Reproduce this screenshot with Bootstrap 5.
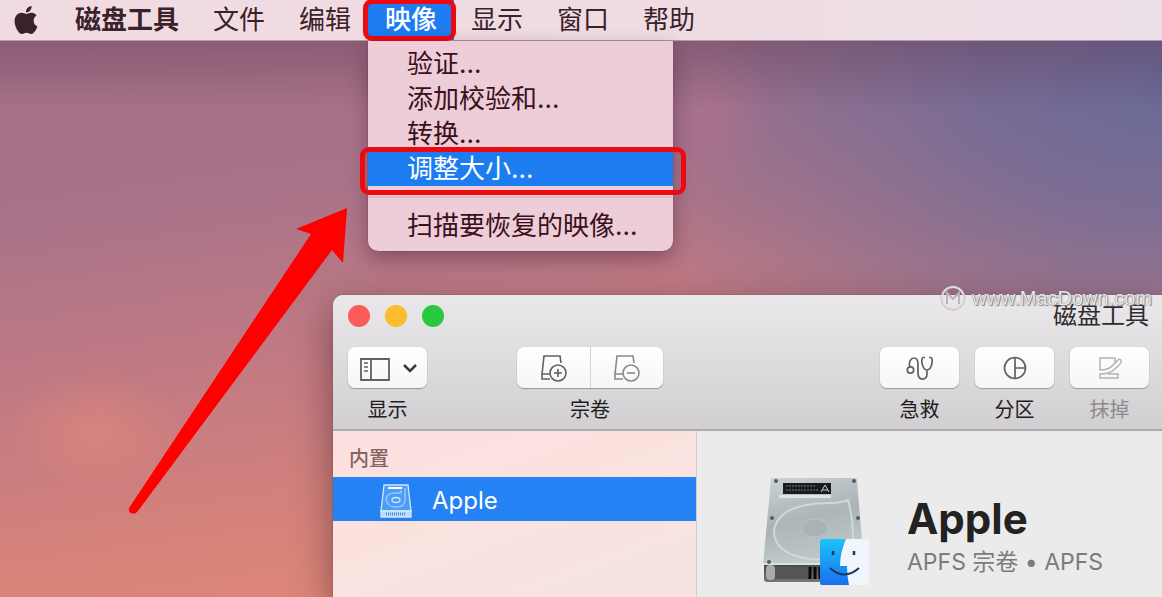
<!DOCTYPE html>
<html lang="zh-CN">
<head>
<meta charset="utf-8">
<meta name="viewport" content="width=device-width, initial-scale=1">
<title>磁盘工具</title>
<link href="https://cdn.jsdelivr.net/npm/bootstrap@5.3.0/dist/css/bootstrap.min.css" rel="stylesheet">
<style>
  :root { --blue: #1c7cf0; --mark-red: #ee0810; }
  body { font-family: Inter, "Noto Sans CJK SC", sans-serif; }
  .desktop {
    min-height: 100vh;
    background:
      linear-gradient(180deg, rgba(90,50,75,.35) 40px, rgba(90,50,75,0) 110px),
      radial-gradient(ellipse 60px 90px at 712px 110px, rgba(185,115,140,.45), rgba(185,115,140,0)),
      radial-gradient(ellipse 90px 60px at 95px 430px, rgba(230,140,120,.5), rgba(230,140,120,0)),
      radial-gradient(ellipse 560px 420px at 100% 12%, #696a98 0%, rgba(105,106,152,.75) 35%, rgba(105,106,152,0) 100%),
      linear-gradient(172deg, #a27189 0%, #a97389 30%, #c47b82 55%, #d98479 78%, #e48c76 100%);
  }
  .menubar { height: 41px; padding-left: 12px; font-size: 26px; background: linear-gradient(90deg, #f0dbe1, #efdce3 60%, #ebdfe8); border-bottom: 1px solid #b89aa8; z-index: 3; }
  .menubar .nav-link { height: 40px; line-height: 40px; padding: 0 17px; color: #3b2129; }
  .menubar .apple-link { padding: 0; width: 46px; line-height: 0; }
  .menubar .nav-link.active { color: #fff; background: var(--blue); font-weight: 500; }
  .menubar .app-name { font-weight: 700; }
  .image-menu { top: 41px; left: 0; width: 305px; margin: 0; padding: 5px 0 8px; border: 0; border-radius: 0 0 10px 10px; background: #edcdd7; font-size: 26px; box-shadow: 0 0 1px rgba(60,20,40,.7), 0 8px 20px rgba(60,20,40,.4); }
  .image-menu .dropdown-item { padding: 0 39px; line-height: 35px; color: #3b101c; }
  .image-menu .dropdown-item.active { color: #fff; background: var(--blue); }
  .image-menu .dropdown-divider { margin: 10px 0; border-top: 2px solid #ddbfc9; opacity: 1; }
  .marked { position: relative; }
  .marked::after { content: ""; position: absolute; z-index: 5; border: 5px solid var(--mark-red); border-radius: 9px; pointer-events: none; }
  .mark-title::after { inset: -1px -2px -1px -5px; }
  .mark-item::after { inset: -4px -13px -9px -8px; }
  .pointer-arrow { left: 128px; top: 208px; pointer-events: none; }
  .app-window { left: 333px; right: 0; top: 295px; bottom: 0; border-radius: 10px 0 0 0; background: #ebebeb; box-shadow: 0 0 1px rgba(50,20,30,.8), 0 14px 38px rgba(50,20,30,.5); }
  .titlebar { height: 136px; padding: 0 13px 0 15px; border-bottom: 2px solid #adabad; border-top-left-radius: 10px; background: linear-gradient(#eae8ea, #d1cfd1); }
  .title-row { height: 42px; }
  .lights { gap: 15px; }
  .window-title { font-size: 24px; line-height: 42px; color: #2e2c2e; }
  .light { width: 22px; height: 22px; padding: 0; border: 0; border-radius: 50%; }
  .light-close { background: #fc5b57; } .light-min { background: #fdbb2e; } .light-max { background: #28c840; }
  .tool-row { padding-top: 10px; font-size: 20px; line-height: 28px; color: #1e1c1e; }
  .tool { display: block; width: 79px; height: 41px; padding: 0; border: 0; border-radius: 7px; background: linear-gradient(#fff, #f6f6f6); box-shadow: 0 1px 1px rgba(0,0,0,.28), 0 0 1px rgba(0,0,0,.2); color: #626062; }
  .tool:disabled { color: #b4b3b4; }
  .tool:disabled + .tool-label { color: #8d8b8d; }
  .tool svg { display: block; margin: auto; }
  .tool-pair { border-radius: 7px; box-shadow: 0 1px 1px rgba(0,0,0,.28), 0 0 1px rgba(0,0,0,.2); }
  .tool-pair .tool { width: 73px; box-shadow: none; }
  .tool-pair .tool + .tool { border-left: 1px solid #d5d3d5; }
  .tool-space { margin-left: 90px; }
  .tool-label { margin-top: 8px; }
  .side { width: 364px; flex: none; background: linear-gradient(160deg, #fde0e0, #fbe2df 40%, #f5e4e2); border-right: 1px solid #d0cccc; }
  .side-title { padding: 13px 16px 0; height: 46px; font-size: 20px; line-height: 31px; font-weight: 500; color: #836465; }
  .side-row { height: 44px; padding: 4px 0 0 47px; gap: 20px; color: #fff; background: #2582f4; font-size: 24px; text-decoration: none; }
  .side-row:hover { color: #fff; }
  .detail { padding: 44px 0 0 64px; gap: 36px; }
  .volume-name { margin: 20px 0 0; font-size: 42px; line-height: 48px; font-weight: 700; color: #222; }
  .volume-kind { font-size: 23px; line-height: 38px; color: #7b7b7b; white-space: nowrap; }
  .watermark { right: 10px; top: 284px; z-index: 4; gap: 6px; font: 20px/28px "Liberation Sans", Arial, sans-serif; color: #e9e6ea; text-shadow: 0 0 1px #666, 1px 1px 1px #888; }
</style>
</head>
<body>
<div class="desktop position-relative overflow-hidden">
  <nav class="menubar position-relative" aria-label="菜单栏">
    <ul class="nav flex-nowrap text-nowrap">
      <li class="nav-item"><a class="nav-link apple-link" href="#" aria-label="Apple">
        <svg width="28" height="40" viewBox="0 -5 24 34" fill="#3b2129"><path d="M12.152 6.896c-.948 0-2.415-1.078-3.96-1.04-2.04.027-3.91 1.183-4.961 3.014-2.117 3.675-.546 9.103 1.519 12.09 1.013 1.454 2.208 3.09 3.792 3.039 1.52-.065 2.09-.987 3.935-.987 1.831 0 2.35.987 3.96.948 1.637-.026 2.676-1.48 3.676-2.948 1.156-1.688 1.636-3.325 1.662-3.415-.039-.013-3.182-1.221-3.22-4.857-.026-3.04 2.48-4.494 2.597-4.559-1.429-2.09-3.623-2.324-4.39-2.376-2-.156-3.675 1.09-4.61 1.09zM15.53 3.83c.843-1.012 1.4-2.427 1.245-3.83-1.207.052-2.662.805-3.532 1.818-.78.896-1.454 2.338-1.273 3.714 1.338.104 2.715-.688 3.559-1.701"/></svg></a></li>
      <li class="nav-item"><a class="nav-link app-name" href="#">磁盘工具</a></li>
      <li class="nav-item"><a class="nav-link" href="#">文件</a></li>
      <li class="nav-item"><a class="nav-link" href="#">编辑</a></li>
      <li class="nav-item dropdown">
        <a class="nav-link active marked mark-title" href="#" aria-expanded="true">映像</a>
        <div class="dropdown-menu image-menu show">
          <a class="dropdown-item" href="#">验证...</a>
          <a class="dropdown-item" href="#">添加校验和...</a>
          <a class="dropdown-item" href="#">转换...</a>
          <a class="dropdown-item active marked mark-item" href="#">调整大小...</a>
          <hr class="dropdown-divider">
          <a class="dropdown-item" href="#">扫描要恢复的映像...</a>
        </div>
      </li>
      <li class="nav-item"><a class="nav-link" href="#">显示</a></li>
      <li class="nav-item"><a class="nav-link" href="#">窗口</a></li>
      <li class="nav-item"><a class="nav-link" href="#">帮助</a></li>
    </ul>
  </nav>

  <svg class="pointer-arrow position-absolute" width="220" height="306" viewBox="0 0 220 306" fill="#f00" aria-hidden="true"><path d="M219 0 168 21 183 26 1 300Q0 304 3 305Q7 307 10 303L204 42 215 55Z"/></svg>

  <main class="app-window position-absolute d-flex flex-column">
    <header class="titlebar">
      <div class="title-row d-flex align-items-center">
        <div class="lights d-flex">
          <button class="light light-close" aria-label="关闭"></button>
          <button class="light light-min" aria-label="最小化"></button>
          <button class="light light-max" aria-label="缩放"></button>
        </div>
        <div class="window-title ms-auto">磁盘工具</div>
      </div>
      <div class="tool-row d-flex text-center">
        <div>
          <button class="tool" aria-label="显示"><svg width="60" height="26" viewBox="0 0 60 26" fill="none" stroke="currentColor" stroke-width="1.8"><path d="M3 4h28v21H3zM13 4v21"/><path d="M6 8h4M6 12h4M6 16h4" stroke-width="1.5"/><path d="m46 10 6 6 6-6" stroke="#3c3a3c" stroke-width="2.5"/></svg></button>
          <div class="tool-label">显示</div>
        </div>
        <div class="tool-space">
          <div class="tool-pair d-flex">
            <button class="tool rounded-end-0" aria-label="添加宗卷"><svg width="28" height="28" viewBox="0 0 28 28" fill="none" stroke="currentColor" stroke-width="1.6"><path d="M10 25H2V20L4 2H20L21 9M2 20H10"/><circle cx="18" cy="19" r="8"/><path d="M14 19h8M18 15v8"/></svg></button>
            <button class="tool rounded-start-0" aria-label="删除宗卷"><svg width="28" height="28" viewBox="0 0 28 28" fill="none" stroke="#8a888a" stroke-width="1.6"><path d="M10 25H2V20L4 2H20L21 9M2 20H10"/><circle cx="18" cy="19" r="8"/><path d="M14 19h8"/></svg></button>
          </div>
          <div class="tool-label">宗卷</div>
        </div>
        <div class="d-flex gap-3 ms-auto">
          <div><button class="tool" aria-label="急救"><svg width="28" height="26" viewBox="0 0 28 26" fill="none" stroke="currentColor" stroke-width="1.7"><circle cx="4.500" cy="15" r="3.200"/><path d="M4 12C2 7 5 3 8 3S12 6 12 9V18C12 26 21 26 21 19V15M19 2.500H17C14.500 3 16 15 21 15S27.500 3 25 2.500H23"/></svg></button><div class="tool-label">急救</div></div>
          <div><button class="tool" aria-label="分区"><svg width="26" height="26" viewBox="0 0 26 26" fill="none" stroke="currentColor" stroke-width="1.7"><circle cx="13" cy="13" r="10.500"/><path d="M13 2.500V23.500M13 13H23.500"/></svg></button><div class="tool-label">分区</div></div>
          <div><button class="tool" disabled aria-label="抹掉"><svg width="26" height="26" viewBox="0 0 26 26" fill="none" stroke="currentColor" stroke-width="1.500"><path d="M18 8V3H3V15Q12 15 16 10L22 4Q26 5 23 9L18 14Q13 19 3 19V23H21V19H11"/></svg></button><div class="tool-label">抹掉</div></div>
        </div>
      </div>
    </header>
    <div class="d-flex flex-grow-1">
      <aside class="side">
        <div class="side-title">内置</div>
        <a class="side-row d-flex align-items-center" href="#">
          <svg width="32" height="34" viewBox="0 0 32 34" fill="none" stroke="#cfe7ff" stroke-width="1.3" aria-hidden="true"><path d="M4 1H28L31 27H1Z" fill="#4d9df8"/><path d="M1 27H31V33H1Z" fill="#b9dcff"/><path d="M8 4H22" stroke="#fff" stroke-width="2"/><path d="M25 4V16Q25 23 16 23T6 15Q7 9 16 9H21V6" stroke="#9ccbff"/><ellipse cx="16" cy="16" rx="4" ry="2.500"/><path d="M6 30H25" stroke="#4b91dd" stroke-width="3" stroke-dasharray="1 1"/></svg>
          <span>Apple</span>
        </a>
      </aside>
      <section class="detail d-flex align-items-start">
        <svg width="110" height="112" viewBox="0 0 110 112" class="flex-shrink-0" aria-hidden="true">
          <defs>
            <linearGradient id="metal" x1="0" y1="0" x2=".3" y2="1"><stop stop-color="#cbd4d7"/><stop offset=".55" stop-color="#a9b3b6"/><stop offset="1" stop-color="#c3cbcd"/></linearGradient>
            <linearGradient id="base" x2="0" y2="1"><stop stop-color="#444"/><stop offset="1" stop-color="#777"/></linearGradient>
            <linearGradient id="finder" x2="0" y2="1"><stop stop-color="#1bc5f8"/><stop offset="1" stop-color="#1a6fee"/></linearGradient>
          </defs>
          <path d="M3 88H100V104Q100 107 97 107H6Q3 107 3 104Z" fill="url(#base)"/>
          <rect x="5" y="90" width="9" height="15" rx="4" fill="#aaa"/><path d="M14 92H48V104H14Z" fill="#555"/>
          <path d="M49 92V104M54 92V104M59 92V104" stroke="#080808" stroke-width="3"/>
          <path d="M10 4Q10 3 12 3H94Q96 3 96 5L103 90H2Z" fill="url(#metal)"/>
          <path d="M2 89H103" stroke="#dce1e2" stroke-width="2"/>
          <path d="M87 25Q94 50 91 72Q76 86 48 84Q12 78 13 55Q18 29 66 28Q80 28 87 25Z" fill="#b5bec1" fill-opacity=".35" stroke="#d0d8da" stroke-width="2"/>
          <ellipse cx="54" cy="53" rx="13" ry="9" fill="#a9b2b5" stroke="#bac3c6"/>
          <path d="M18 20H70V23H18Z" fill="#dfe5e6"/><path d="M22 8H70V19H22Z" fill="#191b1c"/><path d="M25 11H55M25 15H57" stroke="#7a7e80" stroke-dasharray="2 1"/><path d="m60 17 4-7 4 7M61 15h6" stroke="#ccc" fill="none"/>
          <g fill="#555e61"><circle cx="15" cy="6" r="2"/><circle cx="93" cy="6" r="2"/><circle cx="11" cy="43" r="2"/><circle cx="97" cy="43" r="2"/><circle cx="8" cy="87" r="2"/></g>
          <rect x="59" y="64" width="49" height="46" rx="2" fill="#f1f5fc"/>
          <path d="M61 64H85Q79 78 79 91H86Q86 101 88 110H61Q59 110 59 108V66Q59 64 61 64Z" fill="url(#finder)"/>
          <path d="M72 76V80M93 76V80" stroke="#17375c" stroke-width="2.500"/><path d="M69 93Q83 106 98 93" fill="none" stroke="#17375c" stroke-width="2"/>
        </svg>
        <div>
          <h1 class="volume-name">Apple</h1>
          <div class="volume-kind">APFS 宗卷 • APFS</div>
        </div>
      </section>
    </div>
  </main>

  <div class="watermark position-absolute d-flex align-items-center">
    <svg width="26" height="28" viewBox="0 0 26 28" fill="none" stroke="#dedade" stroke-width="2" aria-hidden="true"><circle cx="13" cy="14" r="12" stroke="#9b959b" stroke-width="1"/><circle cx="13" cy="14" r="11"/><path d="M7 20V9L13 15L19 9V20" stroke="#bab5ba"/></svg>
    <span>www.MacDown.com</span>
  </div>
</div>
<script src="https://cdn.jsdelivr.net/npm/bootstrap@5.3.0/dist/js/bootstrap.bundle.min.js"></script>
</body>
</html>
